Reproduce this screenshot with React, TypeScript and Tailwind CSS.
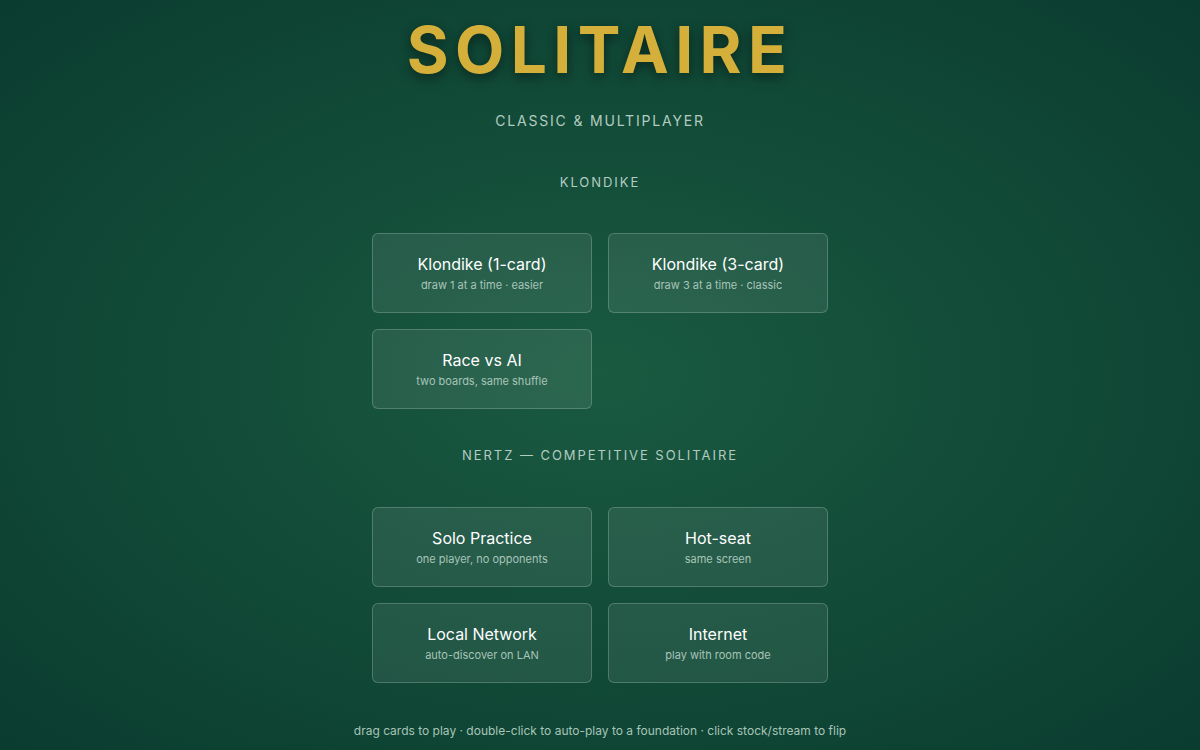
const klondike = [
  { title: "Klondike (1-card)", sub: "draw 1 at a time · easier" },
  { title: "Klondike (3-card)", sub: "draw 3 at a time · classic" },
  { title: "Race vs AI", sub: "two boards, same shuffle" },
];

const nertz = [
  { title: "Solo Practice", sub: "one player, no opponents" },
  { title: "Hot-seat", sub: "same screen" },
  { title: "Local Network", sub: "auto-discover on LAN" },
  { title: "Internet", sub: "play with room code" },
];

function ModeCard({ title, sub }: { title: string; sub: string }) {
  return (
    <button className="h-20 w-[220px] rounded-md border border-white/20 bg-white/[0.08] flex flex-col items-center justify-center gap-[3px] hover:bg-white/[0.14] transition-colors">
      <span className="text-white text-base leading-5">{title}</span>
      <span className="text-[11px] leading-4 text-[#a8c4b8]">{sub}</span>
    </button>
  );
}

function SectionLabel({ children }: { children: string }) {
  return (
    <h2 className="text-[13px] leading-4 tracking-[0.15em] text-[#b3cbc0] uppercase">
      {children}
    </h2>
  );
}

export default function App() {
  return (
    <div
      className="min-h-screen w-full flex flex-col items-center bg-[radial-gradient(ellipse_at_center,#1a5a41_0%,#0a3c2f_100%)]"
      style={{ fontFamily: "Inter, 'Noto Sans', sans-serif" }}
    >
      {/* Header */}
      <h1 className="mt-[18px] text-[64px] leading-[64px] font-bold tracking-[0.1em] text-[#d4b03a] [text-shadow:0_4px_12px_rgba(0,0,0,0.45)]">
        SOLITAIRE
      </h1>
      <p className="mt-[29px] text-sm leading-5 tracking-[0.13em] text-[#b3cbc0]">
        CLASSIC &amp; MULTIPLAYER
      </p>

      {/* Klondike */}
      <div className="mt-[43px]">
        <SectionLabel>Klondike</SectionLabel>
      </div>
      <div className="mt-[43px] grid grid-cols-2 gap-4">
        {klondike.map((m) => (
          <ModeCard key={m.title} {...m} />
        ))}
      </div>

      {/* Nertz */}
      <div className="mt-[38px]">
        <SectionLabel>Nertz — Competitive Solitaire</SectionLabel>
      </div>
      <div className="mt-[44px] grid grid-cols-2 gap-4">
        {nertz.map((m) => (
          <ModeCard key={m.title} {...m} />
        ))}
      </div>

      <p className="mt-[40px] text-xs leading-4 text-[#a8c4b8]">
        drag cards to play · double-click to auto-play to a foundation · click stock/stream to flip
      </p>
    </div>
  );
}
